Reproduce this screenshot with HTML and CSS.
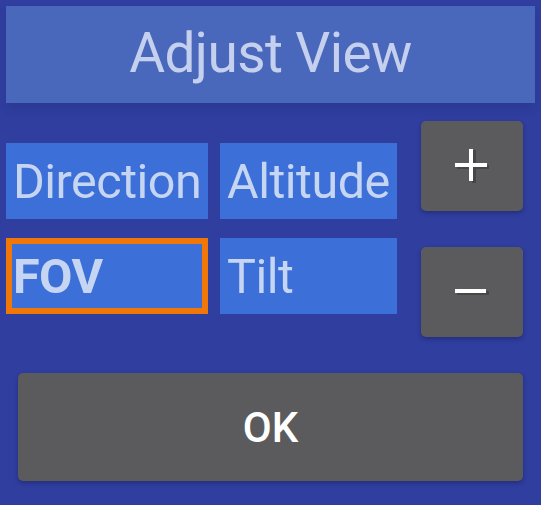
FILE: index.html
```html
<!DOCTYPE html>
<html>
<head>
<meta charset="utf-8">
<link rel="stylesheet" href="styles.css">
</head>
<body>
<div class="dialog">
  <div class="title">Adjust View</div>
  <div class="controls">
    <div class="cells">
      <div class="cell">Direction</div>
      <div class="cell">Altitude</div>
      <div class="cell selected">FOV</div>
      <div class="cell">Tilt</div>
    </div>
    <div class="steppers">
      <button class="btn step">
        <svg width="34" height="34" viewBox="0 0 34 34"><g fill="#222" opacity="0.35"><rect x="2" y="16" width="32" height="4"/><rect x="17" y="1" width="4" height="33"/></g><g fill="#fff"><rect x="0" y="14" width="32" height="4"/><rect x="14" y="0" width="4" height="32"/></g></svg>
      </button>
      <button class="btn step">
        <svg width="34" height="8" viewBox="0 0 34 8"><rect x="2" y="3" width="32" height="4" fill="#222" opacity="0.35"/><rect x="0" y="1" width="31" height="4" fill="#fff"/></svg>
      </button>
    </div>
  </div>
  <button class="btn ok">OK</button>
</div>
</body>
</html>
```
FILE: styles.css
```css
* { box-sizing: border-box; }
html, body {
  margin: 0;
  padding: 0;
  background: #2f3e9f;
  width: 541px;
  height: 505px;
  overflow: hidden;
  font-family: Roboto, "Noto Sans", sans-serif;
}
.dialog {
  display: flex;
  flex-direction: column;
}
.title {
  margin: 6px 6px 0 6px;
  height: 97px;
  background: #4a68bb;
  color: #c5d0ee;
  font-size: 55px;
  letter-spacing: -0.6px;
  display: flex;
  align-items: center;
  justify-content: center;
  padding-bottom: 4px;
  box-shadow: 0 6px 10px rgba(0, 0, 0, 0.08);
}
.controls {
  display: flex;
  align-items: flex-start;
  padding-left: 6px;
}
.cells {
  margin-top: 40px;
  display: grid;
  grid-template-columns: 202px 177px;
  grid-auto-rows: 76px;
  column-gap: 12px;
  row-gap: 19px;
}
.cell {
  background: #3c70d8;
  color: #c6d5f2;
  font-size: 48.5px;
  letter-spacing: -0.5px;
  display: flex;
  align-items: center;
  padding-left: 7px;
  white-space: nowrap;
  overflow: hidden;
}
.cell.selected {
  border: 6px solid #f27709;
  padding-left: 1px;
  font-weight: bold;
}
.steppers {
  margin-left: 24px;
  margin-top: 18px;
  display: flex;
  flex-direction: column;
  gap: 36px;
}
.btn {
  border: none;
  margin: 0;
  padding: 0;
  background: #5b5b5d;
  border-radius: 5px;
  color: #fff;
  font-family: Roboto, "Noto Sans", sans-serif;
  box-shadow: 0 2px 4px rgba(0, 0, 0, 0.25);
  display: flex;
  align-items: center;
  justify-content: center;
}
.step {
  width: 102px;
  height: 90px;
}
.ok {
  margin: 36px 0 0 18px;
  width: 505px;
  height: 108px;
  font-size: 42px;
  font-weight: 500;
}
```
